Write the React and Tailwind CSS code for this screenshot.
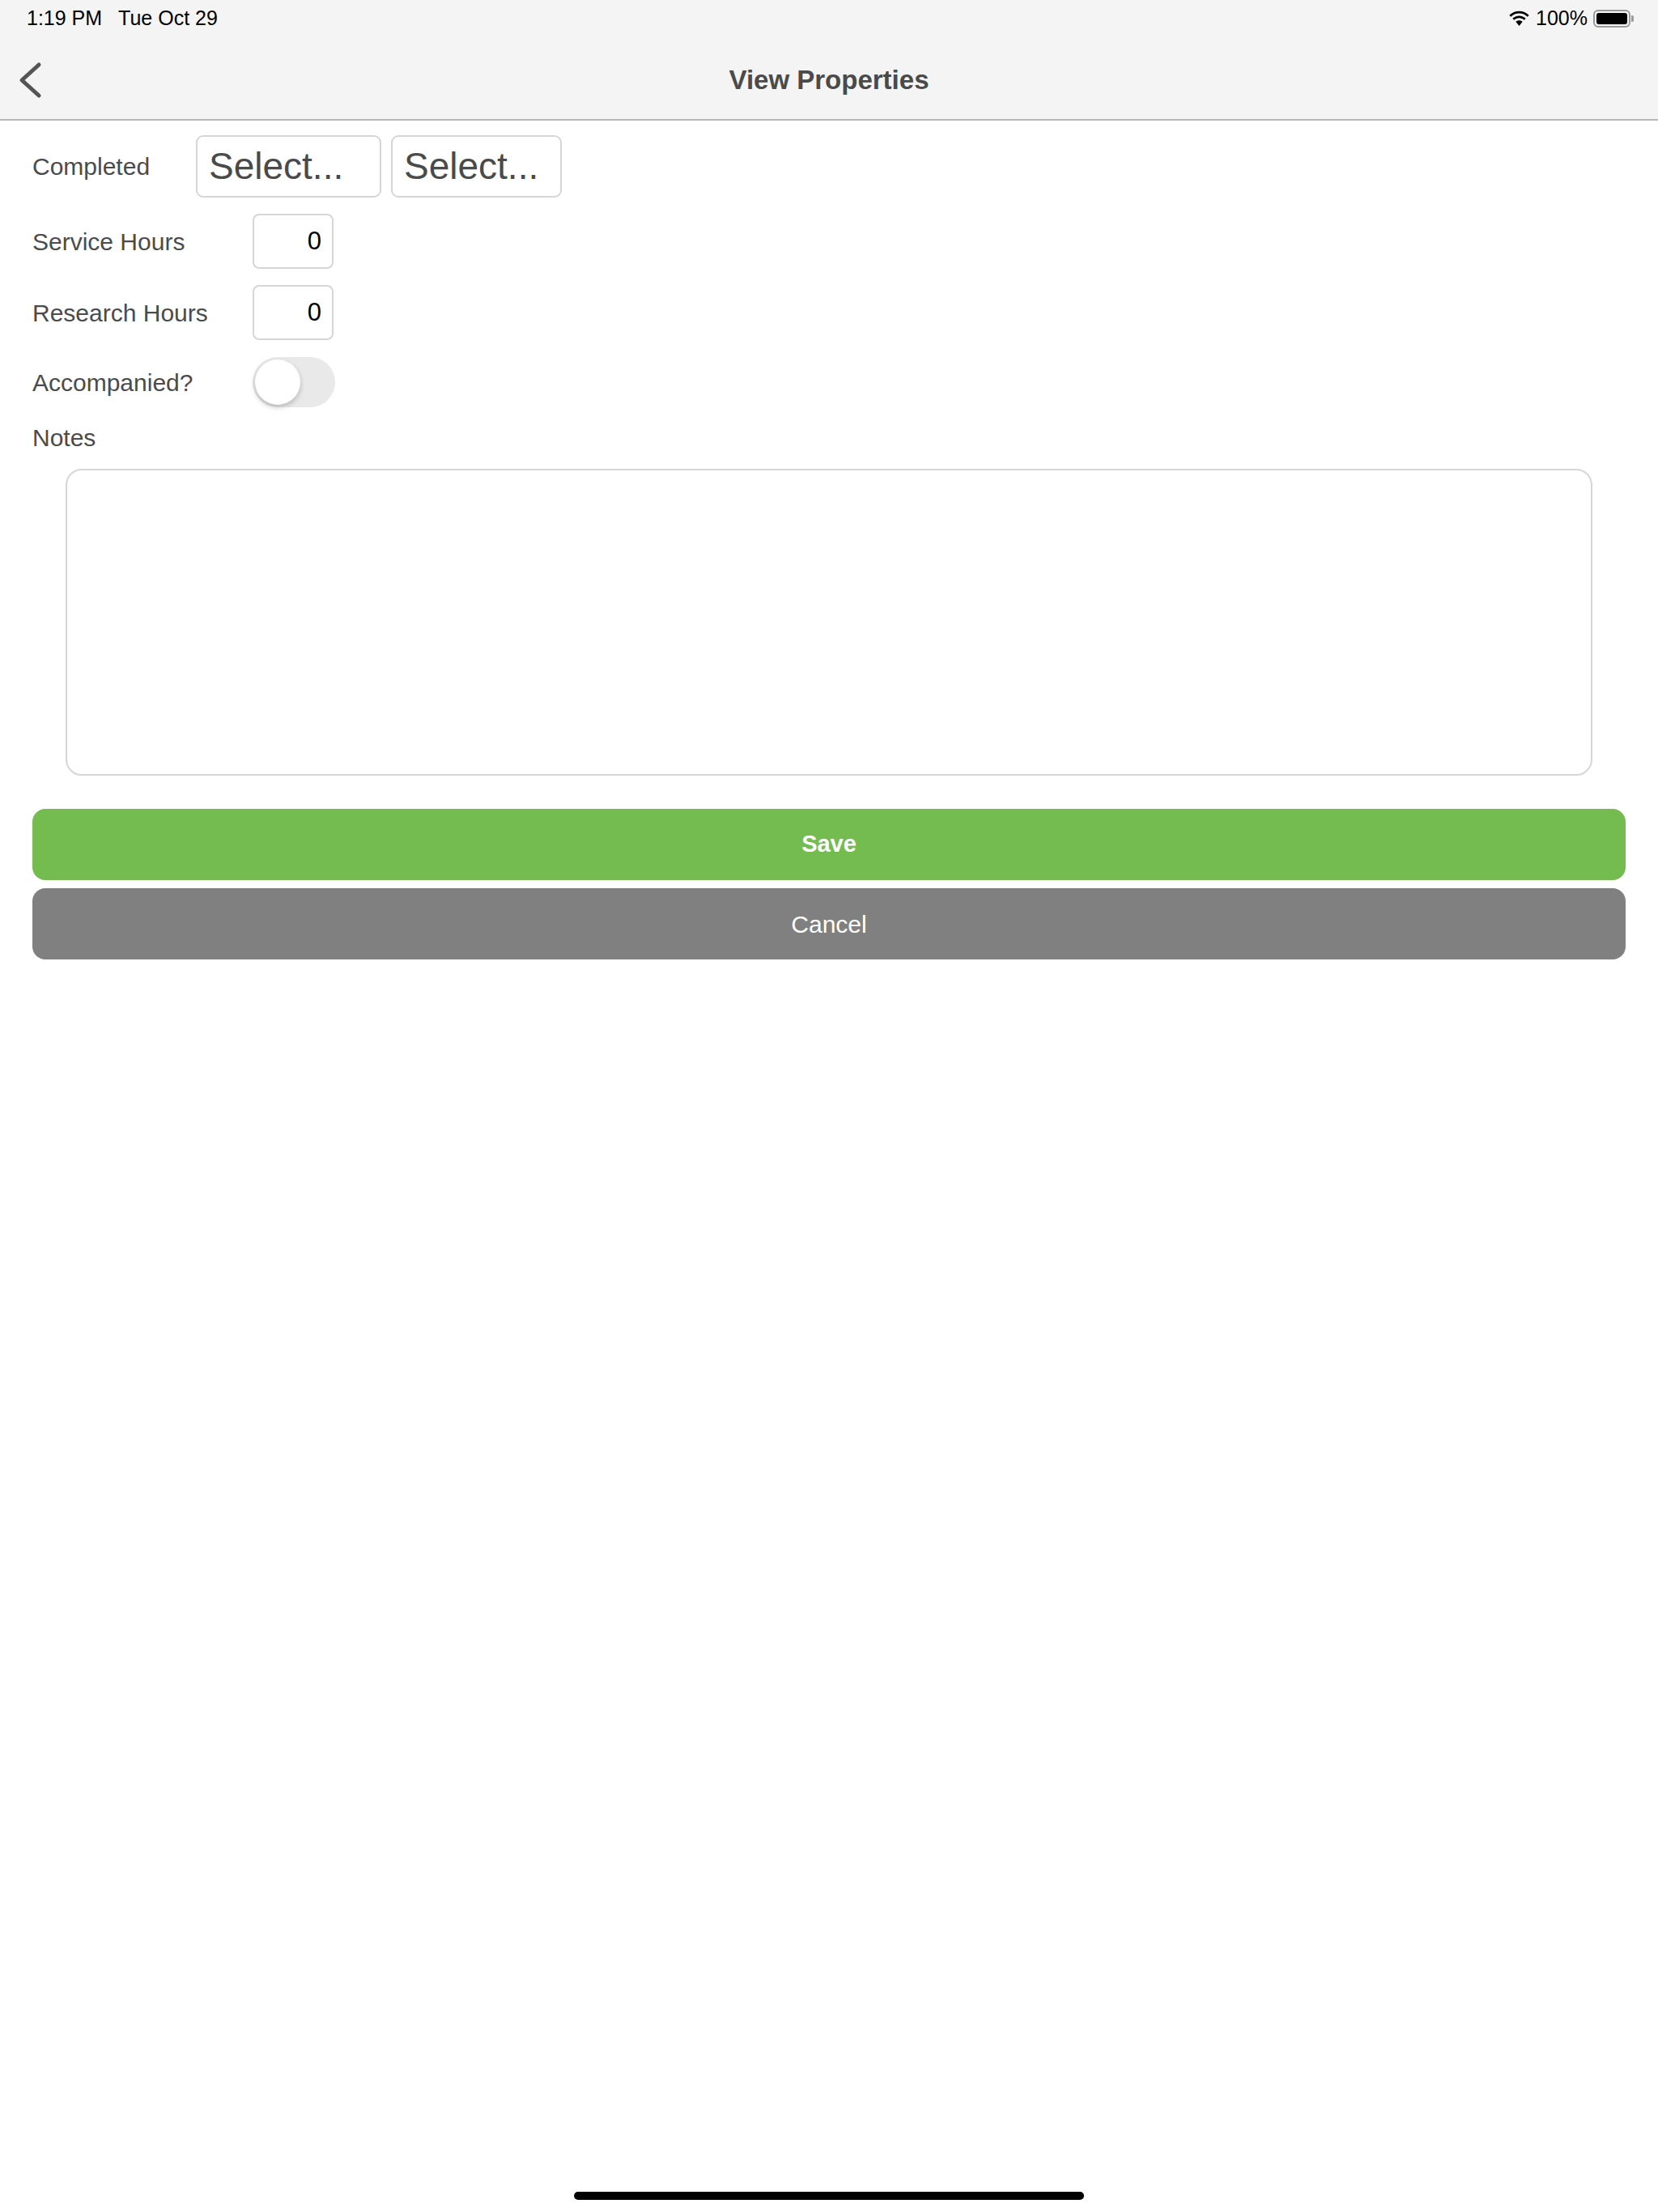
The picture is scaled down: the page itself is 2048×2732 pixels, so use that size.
import { useState } from 'react'

const font = { fontFamily: '"Liberation Sans", Arial, sans-serif' }

function WifiIcon() {
  return (
    <svg width="27" height="21" viewBox="0 0 24 19" fill="#000">
      <path d="M12 3.2c3.6 0 6.9 1.4 9.3 3.7l1.7-1.8C20.1 2.3 16.2.6 12 .6S3.9 2.3 1 5.1l1.7 1.8C5.1 4.6 8.4 3.2 12 3.2z" />
      <path d="M12 8.4c2.2 0 4.2.9 5.7 2.3l1.7-1.8C17.5 7 14.9 5.8 12 5.8S6.5 7 4.6 8.9l1.7 1.8c1.5-1.4 3.5-2.3 5.7-2.3z" />
      <path d="M12 11c1.5 0 2.8.6 3.8 1.5L12 17.2l-3.8-4.7c1-.9 2.3-1.5 3.8-1.5z" />
    </svg>
  )
}

function BatteryIcon() {
  return (
    <span className="flex items-center">
      <span className="flex h-[22px] w-[46px] items-center rounded-[6px] border-2 border-[#9a9a9a] p-[2px]">
        <span className="h-full w-full rounded-[3px] bg-black" />
      </span>
      <span className="ml-[1px] h-[8px] w-[3px] rounded-r-[2px] bg-[#9a9a9a]" />
    </span>
  )
}

function NumberBox({ value }) {
  return (
    <div className="flex h-[68px] w-[100px] items-center justify-end rounded-[8px] border-2 border-[#d6d6d6] pr-[13px] text-[31px] text-black">
      {value}
    </div>
  )
}

function SelectBox({ width }) {
  return (
    <div
      className={`flex h-[77px] items-center rounded-[9px] border-2 border-[#d6d6d6] pl-[14px] text-[46px] text-[#4a4a4a] ${width}`}
    >
      Select...
    </div>
  )
}

export default function App() {
  const [accompanied, setAccompanied] = useState(false)

  return (
    <div className="flex min-h-screen flex-col bg-white" style={font}>
      <header className="h-[149px] border-b-2 border-[#b8b8b8] bg-[#f4f4f4]">
        <div className="flex h-[46px] items-center justify-between pl-[33px] pr-[30px] text-[25px] text-black">
          <div className="flex gap-[20px]">
            <span>1:19 PM</span>
            <span>Tue Oct 29</span>
          </div>
          <div className="flex items-center gap-[7px]">
            <WifiIcon />
            <span>100%</span>
            <BatteryIcon />
          </div>
        </div>
        <div className="relative flex h-[101px] items-center justify-center pt-[4px]">
          <svg
            className="absolute left-[22px] top-[30px]"
            width="32"
            height="46"
            viewBox="0 0 32 46"
            fill="none"
            stroke="#555"
            strokeWidth="5"
            strokeLinecap="round"
            strokeLinejoin="round"
          >
            <path d="M26 4 L5 23 L26 42" />
          </svg>
          <h1 className="text-[33px] font-semibold text-[#4a4a4a]">View Properties</h1>
        </div>
      </header>

      <main className="flex flex-col px-[40px] text-[30px] text-[#4b4b4b]">
        <div className="mt-[18px] flex items-center">
          <span className="w-[202px]">Completed</span>
          <div className="flex gap-[12px]">
            <SelectBox width="w-[229px]" />
            <SelectBox width="w-[211px]" />
          </div>
        </div>

        <div className="mt-[20px] flex items-center">
          <span className="w-[272px]">Service Hours</span>
          <NumberBox value="0" />
        </div>

        <div className="mt-[20px] flex items-center">
          <span className="w-[272px]">Research Hours</span>
          <NumberBox value="0" />
        </div>

        <div className="mt-[21px] flex items-center">
          <span className="w-[272px]">Accompanied?</span>
          <button
            type="button"
            onClick={() => setAccompanied(!accompanied)}
            className={`flex h-[62px] w-[102px] items-center rounded-full p-[3px] ${
              accompanied ? 'justify-end bg-[#74bb50]' : 'justify-start bg-[#e9e9e9]'
            }`}
          >
            <span className="h-[56px] w-[56px] rounded-full bg-white shadow-[0_3px_6px_rgba(0,0,0,0.22)]" />
          </button>
        </div>

        <span className="mt-[20px] leading-[36px]">Notes</span>

        <textarea className="ml-[41px] mr-[41px] mt-[20px] h-[379px] resize-none rounded-[20px] border-2 border-[#d6d6d6] outline-none" />

        <button
          type="button"
          className="mt-[41px] h-[88px] w-full rounded-[16px] bg-[#74bb50] text-[29px] font-semibold text-white"
        >
          Save
        </button>
        <button
          type="button"
          className="mt-[10px] h-[88px] w-full rounded-[16px] bg-[#808080] text-[30px] text-white"
        >
          Cancel
        </button>
      </main>

      <div className="mt-auto flex justify-center pb-[15px]">
        <div className="h-[10px] w-[630px] rounded-full bg-black" />
      </div>
    </div>
  )
}
